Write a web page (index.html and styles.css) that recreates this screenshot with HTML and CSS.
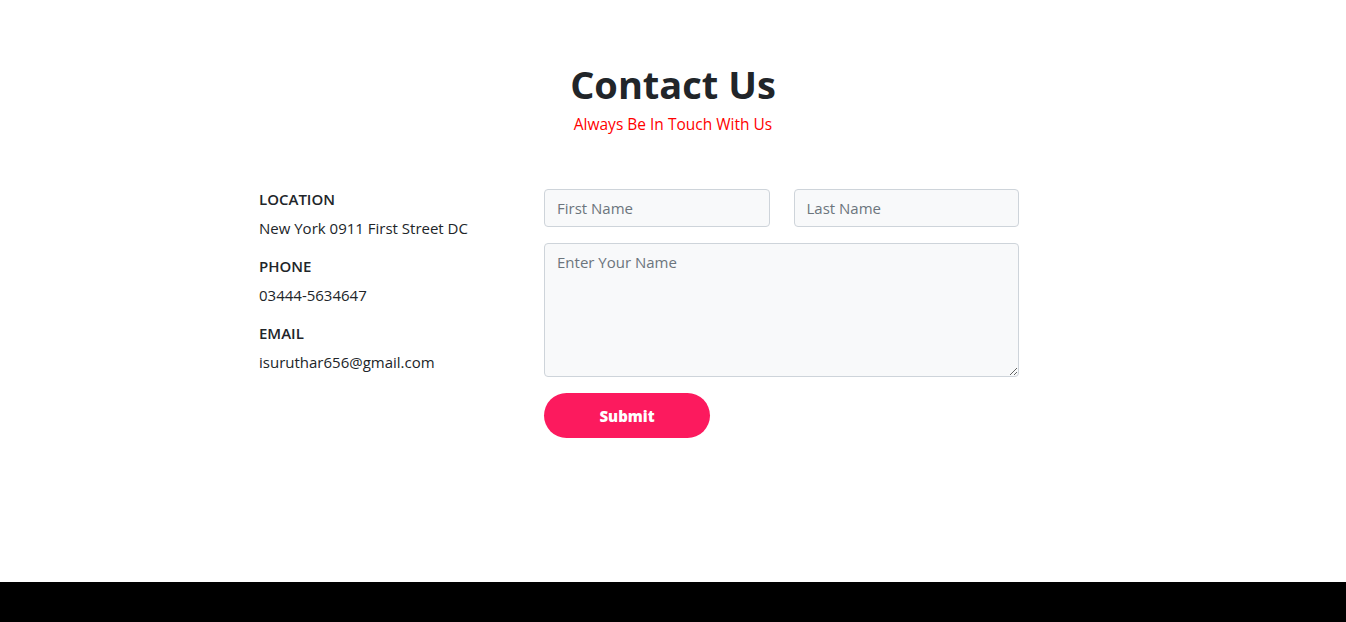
FILE: index.html
```html
<!DOCTYPE html>
<html lang="en">
<head>
<meta charset="utf-8">
<title>Contact Us</title>
<link rel="stylesheet" href="styles.css">
</head>
<body>
<main class="page">
  <header class="heading">
    <h1 class="title">Contact Us</h1>
    <p class="subtitle">Always Be In Touch With Us</p>
  </header>
  <section class="contact">
    <div class="info">
      <div class="info-item">
        <h6 class="info-label">LOCATION</h6>
        <p class="info-value">New York 0911 First Street DC</p>
      </div>
      <div class="info-item">
        <h6 class="info-label">PHONE</h6>
        <p class="info-value">03444-5634647</p>
      </div>
      <div class="info-item">
        <h6 class="info-label">EMAIL</h6>
        <p class="info-value">isuruthar656@gmail.com</p>
      </div>
    </div>
    <form class="form">
      <div class="form-row">
        <input class="field" type="text" placeholder="First Name">
        <input class="field" type="text" placeholder="Last Name">
      </div>
      <textarea class="field area" placeholder="Enter Your Name"></textarea>
      <button class="submit" type="button">Submit</button>
    </form>
  </section>
</main>
<footer class="footer"></footer>
</body>
</html>
```
FILE: styles.css
```css
* { box-sizing: border-box; }
html, body { margin: 0; padding: 0; }
body {
  font-family: "Open Sans", "Noto Sans", sans-serif;
  color: #212529;
  background: #fff;
}
.page {
  height: 582px;
  padding-top: 58px;
}
.heading { text-align: center; }
.title {
  margin: 0;
  font-size: 38px;
  font-weight: 700;
  line-height: 52px;
  color: #212529;
}
.subtitle {
  margin: 2px 0 0;
  font-size: 15.5px;
  font-weight: 500;
  line-height: 24px;
  color: #ff0000;
}
.contact {
  width: 828px;
  margin: 53px auto 0;
  display: flex;
}
.info {
  width: 285px;
  display: flex;
  flex-direction: column;
  gap: 18px;
}
.info-label {
  margin: 0;
  font-size: 15px;
  font-weight: 600;
  line-height: 20px;
}
.info-value {
  margin: 9px 0 0;
  font-size: 15px;
  line-height: 20px;
}
.form {
  width: 475px;
  display: flex;
  flex-direction: column;
  align-items: flex-start;
  gap: 16px;
}
.form-row {
  width: 100%;
  display: flex;
  gap: 24px;
}
.field {
  flex: 1;
  height: 38px;
  padding: 6px 12px;
  border: 1px solid #ced4da;
  border-radius: 4px;
  background: #f8f9fa;
  font-family: inherit;
  font-size: 15px;
  color: #495057;
}
.field::placeholder { color: #6c757d; }
.area {
  width: 100%;
  height: 134px;
  flex: none;
  padding-top: 8px;
  resize: vertical;
}
.submit {
  width: 166px;
  height: 45px;
  border: none;
  border-radius: 23px;
  background: #fc1a5e;
  color: #fff;
  font-family: inherit;
  font-size: 15px;
  font-weight: 800;
}
.footer {
  height: 40px;
  background: #000;
}
```
